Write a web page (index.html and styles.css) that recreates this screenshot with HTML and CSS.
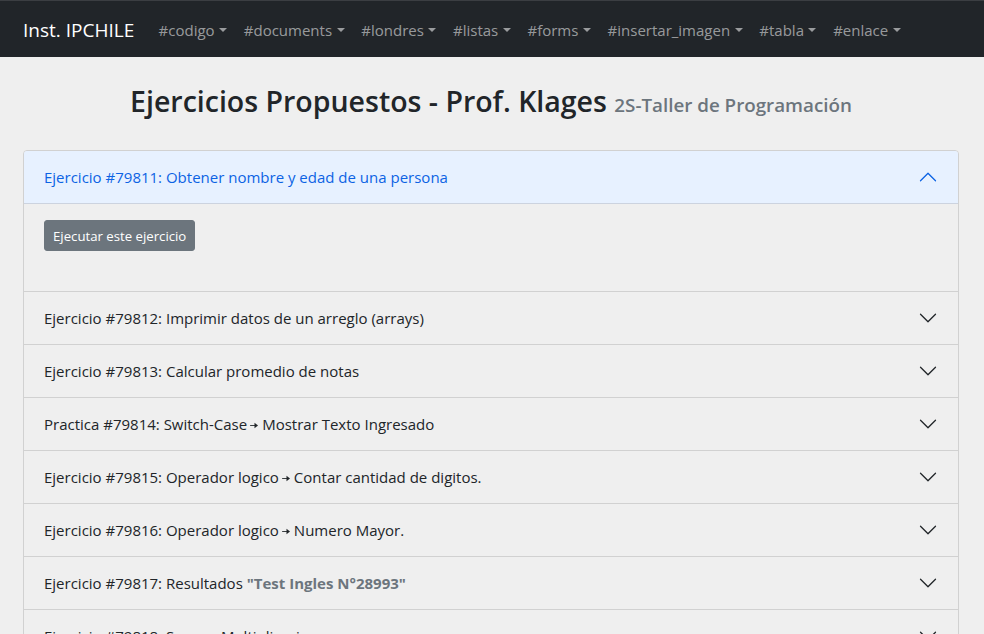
FILE: index.html
```html
<!DOCTYPE html>
<html lang="es">
<head>
<meta charset="utf-8">
<title>Ejercicios Propuestos</title>
<link rel="stylesheet" href="styles.css">
</head>
<body>
<nav class="navbar">
  <a class="brand" href="#">Inst. IPCHILE</a>
  <ul class="nav">
    <li><a class="nav-link" href="#">#codigo</a></li>
    <li><a class="nav-link" href="#">#documents</a></li>
    <li><a class="nav-link" href="#">#londres</a></li>
    <li><a class="nav-link" href="#">#listas</a></li>
    <li><a class="nav-link" href="#">#forms</a></li>
    <li><a class="nav-link" href="#">#insertar_imagen</a></li>
    <li><a class="nav-link" href="#">#tabla</a></li>
    <li><a class="nav-link" href="#">#enlace</a></li>
  </ul>
</nav>

<main class="container">
  <h2 class="title">Ejercicios Propuestos - Prof. Klages <small class="muted">2S-Taller de Programación</small></h2>

  <div class="accordion">
    <div class="acc-item">
      <button class="acc-button active"><span>Ejercicio #79811: Obtener nombre y edad de una persona</span><svg class="chev" viewBox="0 0 16 16"><path d="M1.646 4.646a.5.5 0 0 1 .708 0L8 10.293l5.646-5.647a.5.5 0 0 1 .708.708l-6 6a.5.5 0 0 1-.708 0l-6-6a.5.5 0 0 1 0-.708z"/></svg></button>
      <div class="acc-body">
        <button class="btn-sm">Ejecutar este ejercicio</button>
        <div class="output"></div>
      </div>
    </div>
    <div class="acc-item">
      <button class="acc-button"><span>Ejercicio #79812: Imprimir datos de un arreglo (arrays)</span><svg class="chev" viewBox="0 0 16 16"><path d="M1.646 4.646a.5.5 0 0 1 .708 0L8 10.293l5.646-5.647a.5.5 0 0 1 .708.708l-6 6a.5.5 0 0 1-.708 0l-6-6a.5.5 0 0 1 0-.708z"/></svg></button>
    </div>
    <div class="acc-item">
      <button class="acc-button"><span>Ejercicio #79813: Calcular promedio de notas</span><svg class="chev" viewBox="0 0 16 16"><path d="M1.646 4.646a.5.5 0 0 1 .708 0L8 10.293l5.646-5.647a.5.5 0 0 1 .708.708l-6 6a.5.5 0 0 1-.708 0l-6-6a.5.5 0 0 1 0-.708z"/></svg></button>
    </div>
    <div class="acc-item">
      <button class="acc-button"><span>Practica #79814: Switch-Case<svg class="arrow" viewBox="0 0 10 8"><path d="M0 3.5h6v1H0z"/><path d="M5 0.8L9 4 5 7.2z"/></svg>Mostrar Texto Ingresado</span><svg class="chev" viewBox="0 0 16 16"><path d="M1.646 4.646a.5.5 0 0 1 .708 0L8 10.293l5.646-5.647a.5.5 0 0 1 .708.708l-6 6a.5.5 0 0 1-.708 0l-6-6a.5.5 0 0 1 0-.708z"/></svg></button>
    </div>
    <div class="acc-item">
      <button class="acc-button"><span>Ejercicio #79815: Operador logico<svg class="arrow" viewBox="0 0 10 8"><path d="M0 3.5h6v1H0z"/><path d="M5 0.8L9 4 5 7.2z"/></svg>Contar cantidad de digitos.</span><svg class="chev" viewBox="0 0 16 16"><path d="M1.646 4.646a.5.5 0 0 1 .708 0L8 10.293l5.646-5.647a.5.5 0 0 1 .708.708l-6 6a.5.5 0 0 1-.708 0l-6-6a.5.5 0 0 1 0-.708z"/></svg></button>
    </div>
    <div class="acc-item">
      <button class="acc-button"><span>Ejercicio #79816: Operador logico<svg class="arrow" viewBox="0 0 10 8"><path d="M0 3.5h6v1H0z"/><path d="M5 0.8L9 4 5 7.2z"/></svg>Numero Mayor.</span><svg class="chev" viewBox="0 0 16 16"><path d="M1.646 4.646a.5.5 0 0 1 .708 0L8 10.293l5.646-5.647a.5.5 0 0 1 .708.708l-6 6a.5.5 0 0 1-.708 0l-6-6a.5.5 0 0 1 0-.708z"/></svg></button>
    </div>
    <div class="acc-item">
      <button class="acc-button"><span>Ejercicio #79817: Resultados <b class="muted">"Test Ingles N°28993"</b></span><svg class="chev" viewBox="0 0 16 16"><path d="M1.646 4.646a.5.5 0 0 1 .708 0L8 10.293l5.646-5.647a.5.5 0 0 1 .708.708l-6 6a.5.5 0 0 1-.708 0l-6-6a.5.5 0 0 1 0-.708z"/></svg></button>
    </div>
    <div class="acc-item">
      <button class="acc-button"><span>Ejercicio #79818: Suma y Multiplicacion</span><svg class="chev" viewBox="0 0 16 16"><path d="M1.646 4.646a.5.5 0 0 1 .708 0L8 10.293l5.646-5.647a.5.5 0 0 1 .708.708l-6 6a.5.5 0 0 1-.708 0l-6-6a.5.5 0 0 1 0-.708z"/></svg></button>
    </div>
  </div>
</main>
</body>
</html>
```

FILE: styles.css
```css
html, body {
  margin: 0;
  padding: 0;
}

body {
  background: #efefef;
  color: #212529;
  font-family: "Open Sans", "Noto Sans", "Liberation Sans", sans-serif;
  font-size: 15px;
  line-height: 1.5;
  overflow: hidden;
}

.navbar {
  display: flex;
  align-items: center;
  padding: 1px 23px 0;
  box-sizing: border-box;
  height: 57px;
  background: #212529;
  border-top: 1px solid #3b3e42;
}

.brand {
  color: #fff;
  font-size: 19px;
  text-decoration: none;
  margin-right: 16px;
  line-height: 30px;
}

.nav {
  display: flex;
  list-style: none;
  margin: 0;
  padding: 0;
}

.nav-link {
  display: block;
  padding: 0 8.35px;
  color: rgba(255, 255, 255, 0.55);
  text-decoration: none;
  font-size: 15px;
  line-height: 24px;
}

.nav-link::after {
  content: "";
  display: inline-block;
  margin-left: 0.3em;
  vertical-align: 0.26em;
  border-top: 0.32em solid;
  border-left: 0.32em solid transparent;
  border-right: 0.32em solid transparent;
}

.container {
  padding: 26px 25px 0 23px;
}

.title {
  margin: 0 0 27px;
  text-align: center;
  font-size: 28.5px;
  font-weight: 600;
  line-height: 36px;
}

.muted {
  color: #6c757d;
}

.title small {
  font-size: 18.8px;
  font-weight: 600;
}

.accordion {
  border: 1px solid #d1d1d1;
  border-radius: 4px 4px 0 0;
  overflow: hidden;
}

.acc-item + .acc-item {
  border-top: 1px solid #d1d1d1;
}

.acc-button {
  display: flex;
  align-items: center;
  width: 100%;
  height: 52px;
  padding: 0 20px;
  border: 0;
  background: transparent;
  color: #212529;
  font: inherit;
  text-align: left;
}

.acc-button span {
  flex: 1;
}

.acc-button b {
  font-weight: 700;
}

.chev {
  width: 20px;
  height: 20px;
  fill: #212529;
}

.acc-button.active {
  height: 53px;
  padding-bottom: 1px;
  background: #e7f1ff;
  color: #0c63e4;
  box-shadow: inset 0 -1px 0 #ccd3df;
}

.acc-button.active .chev {
  fill: #0c63e4;
  transform: rotate(180deg);
}

.arrow {
  width: 9px;
  height: 7px;
  margin: 0 3px 0 3px;
  fill: #212529;
  vertical-align: 1px;
}

.acc-body {
  padding: 16px 20px;
}

.btn-sm {
  display: block;
  height: 31px;
  padding: 0 8px;
  border: 1px solid #6c757d;
  border-radius: 3px;
  background: #6c757d;
  color: #fff;
  font-family: inherit;
  font-size: 13.2px;
}

.output {
  height: 24px;
}
```
